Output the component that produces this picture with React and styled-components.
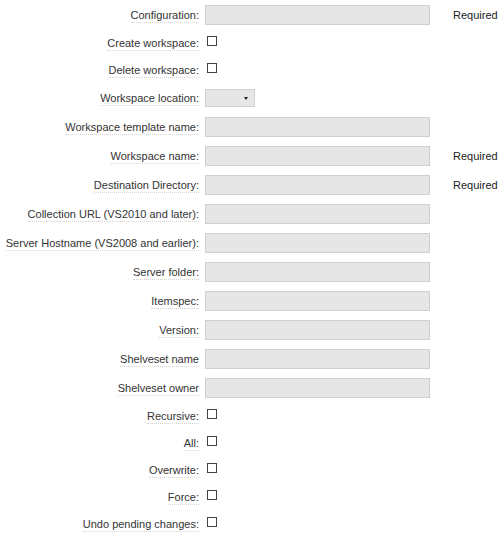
import React from 'react';
import styled, { createGlobalStyle } from 'styled-components';

const GlobalStyle = createGlobalStyle`
    body {
        margin: 0;
        background: #fff;
        font-family: "Liberation Sans", Arial, sans-serif;
        font-size: 11px;
        color: #333;
    }
`;

const fields = [
    { label: 'Configuration:', type: 'text', required: true },
    { label: 'Create workspace:', type: 'check' },
    { label: 'Delete workspace:', type: 'check' },
    { label: 'Workspace location:', type: 'select' },
    { label: 'Workspace template name:', type: 'text' },
    { label: 'Workspace name:', type: 'text', required: true },
    { label: 'Destination Directory:', type: 'text', required: true },
    { label: 'Collection URL (VS2010 and later):', type: 'text' },
    { label: 'Server Hostname (VS2008 and earlier):', type: 'text' },
    { label: 'Server folder:', type: 'text' },
    { label: 'Itemspec:', type: 'text' },
    { label: 'Version:', type: 'text' },
    { label: 'Shelveset name', type: 'text' },
    { label: 'Shelveset owner', type: 'text' },
    { label: 'Recursive:', type: 'check' },
    { label: 'All:', type: 'check' },
    { label: 'Overwrite:', type: 'check' },
    { label: 'Force:', type: 'check' },
    { label: 'Undo pending changes:', type: 'check' },
];

function App() {
    return (
        <>
            <GlobalStyle />
            <Form>
                {fields.map((field) => (
                    <Row key={field.label} $check={field.type === 'check'}>
                        <LabelCell>
                            <Label>{field.label}</Label>
                        </LabelCell>
                        <Control>
                            {field.type === 'text' && <TextInput type="text" />}
                            {field.type === 'check' && <CheckBox type="checkbox" />}
                            {field.type === 'select' && (
                                <Select>
                                    <Arrow />
                                </Select>
                            )}
                        </Control>
                        <Note>{field.required ? 'Required' : ''}</Note>
                    </Row>
                ))}
            </Form>
        </>
    );
}

export default App;

const Form = styled.div`
    display: flex;
    flex-direction: column;
    width: 500px;
`;

const Row = styled.div`
    display: grid;
    grid-template-columns: 200px 230px 1fr;
    align-items: center;
    height: ${(p) => (p.$check ? '27px' : '29px')};
`;

const LabelCell = styled.div`
    text-align: right;
    padding-right: 1px;
`;

const Label = styled.span`
    border-bottom: 1px dotted #d4d4d4;
    padding-bottom: 1px;
    white-space: nowrap;
`;

const Control = styled.div`
    display: flex;
    align-items: center;
    padding-left: 5px;
`;

const TextInput = styled.input`
    box-sizing: border-box;
    width: 225px;
    height: 20px;
    margin: 0;
    padding: 0 4px;
    border: 1px solid #d0d0d0;
    background: #e6e6e6;
    outline: none;
`;

const CheckBox = styled.input`
    appearance: none;
    box-sizing: border-box;
    width: 10px;
    height: 10px;
    margin: 0 0 4px 2px;
    border: 1px solid #444;
    background: #fff;
    border-radius: 0;
`;

const Select = styled.div`
    box-sizing: border-box;
    position: relative;
    width: 50px;
    height: 18px;
    border: 1px solid #d0d0d0;
    background: #e6e6e6;
`;

const Arrow = styled.span`
    position: absolute;
    right: 6px;
    top: 7px;
    width: 0;
    height: 0;
    border-left: 2px solid transparent;
    border-right: 2px solid transparent;
    border-top: 3px solid #222;
`;

const Note = styled.div`
    padding-left: 23px;
    white-space: nowrap;
    color: #222;
`;
